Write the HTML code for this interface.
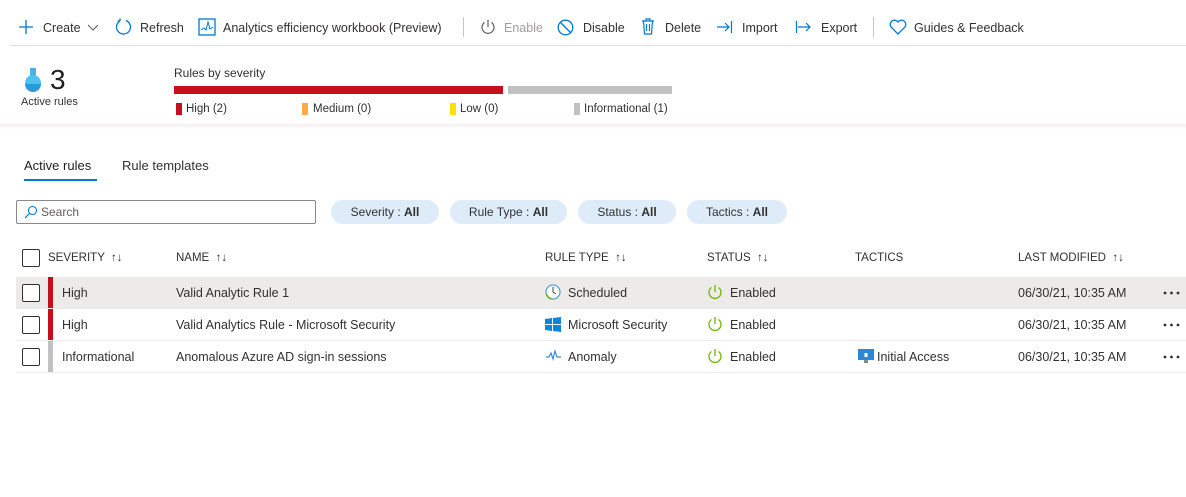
<!DOCTYPE html>
<html><head><style>
*{box-sizing:border-box;margin:0;padding:0}
body{width:1186px;height:497px;background:#fff;font-family:"Liberation Sans",sans-serif;font-size:12.5px;color:#323130;position:relative;overflow:hidden}
.a{position:absolute;white-space:nowrap}
.tb span{position:absolute;top:21px}
.ic{position:absolute}
.pill{position:absolute;top:200px;height:24px;border-radius:12px;background:#deecf9;font-size:12px;line-height:24px;text-align:center}
.hd{position:absolute;top:252px;font-size:11.5px;color:#323130}
.cb{position:absolute;left:22px;width:18px;height:18px;border:1px solid #323130;border-radius:2px;background:#fff}
.row{position:absolute;left:16px;width:1170px;height:32px;border-bottom:1px solid #edebe9}
.row span{position:absolute;top:9px}
.row svg.d{position:absolute;left:1147px;top:14px}
.sev{position:absolute;left:32px;top:0;width:5px;height:31px}
</style></head><body>
<div class="tb">
<svg class="ic" style="left:18px;top:19px" width="16" height="16"><path d="M8 1v14M1 8h14" stroke="#0078d4" stroke-width="1.3"/></svg>
<span style="left:43px">Create</span>
<svg class="ic" style="left:87px;top:24px" width="12" height="8"><path d="M1 1l5 5 5-5" stroke="#605e5c" fill="none"/></svg>
<svg class="ic" style="left:115px;top:18px" width="18" height="18"><path d="M11 2.5A7 7 0 1 1 5 3M5 3V0.5M5 3H2.5" stroke="#0078d4" fill="none" stroke-width="1.3"/></svg>
<span style="left:140px">Refresh</span>
<svg class="ic" style="left:198px;top:18px" width="18" height="18"><rect x="1" y="1" width="16" height="16" fill="none" stroke="#0078d4" stroke-width="1.3"/><path d="M3 12l3-2 2 2 2-8 2 7 3-2" stroke="#0078d4" fill="none"/></svg>
<span style="left:223px">Analytics efficiency workbook (Preview)</span>
<div class="a" style="left:463px;top:17px;width:1px;height:20px;background:#c8c6c4"></div>
<svg class="ic" style="left:480px;top:19px" width="16" height="16"><path d="M8 1v7M4.5 3.5a6 6 0 1 0 7 0" stroke="#605e5c" fill="none" stroke-width="1.2"/></svg>
<span style="left:504px;color:#a19f9d">Enable</span>
<svg class="ic" style="left:557px;top:19px" width="17" height="17"><circle cx="8.5" cy="8.5" r="7.3" stroke="#0078d4" fill="none" stroke-width="1.3"/><path d="M3.5 3.5l10 10" stroke="#0078d4" stroke-width="1.3"/></svg>
<span style="left:583px">Disable</span>
<svg class="ic" style="left:641px;top:18px" width="14" height="17"><path d="M1 3h12M5 3V1h4v2M2.5 3l1 13h7l1-13M5.5 6v7M8.5 6v7" stroke="#0078d4" fill="none" stroke-width="1.2"/></svg>
<span style="left:665px">Delete</span>
<svg class="ic" style="left:716px;top:20px" width="17" height="14"><path d="M1 7h12M9 3l4 4-4 4M15.5 1v12" stroke="#0078d4" fill="none" stroke-width="1.2"/></svg>
<span style="left:742px">Import</span>
<svg class="ic" style="left:795px;top:20px" width="17" height="14"><path d="M1.5 1v12M3 7h12M11 3l4 4-4 4" stroke="#0078d4" fill="none" stroke-width="1.2"/></svg>
<span style="left:821px">Export</span>
<div class="a" style="left:873px;top:17px;width:1px;height:20px;background:#c8c6c4"></div>
<svg class="ic" style="left:889px;top:19px" width="18" height="16"><path d="M9 15L2 8a4 4 0 0 1 7-5 4 4 0 0 1 7 5z" stroke="#0078d4" fill="none" stroke-width="1.3"/></svg>
<span style="left:914px">Guides &amp; Feedback</span>
</div>
<div class="a" style="left:10px;top:45px;width:1176px;height:1px;background:#e1dfdd"></div>
<svg class="ic" style="left:22px;top:67px" width="22" height="26"><rect x="8" y="1" width="6" height="8" fill="#50b0e0"/><circle cx="11" cy="16" r="8" fill="#50c0f0"/><path d="M3 17h16a8 8 0 0 1-16 0" fill="#2a9ad8"/></svg>
<div class="a" style="left:50px;top:64px;font-size:28px;color:#201f1e">3</div>
<div class="a" style="left:21px;top:96px;font-size:11px">Active rules</div>
<div class="a" style="left:174px;top:66px;font-size:12px">Rules by severity</div>
<div class="a" style="left:174px;top:86px;width:329px;height:8px;background:#c50f1f"></div>
<div class="a" style="left:508px;top:86px;width:164px;height:8px;background:#c1c1c1"></div>
<div class="a" style="left:176px;top:103px;width:6px;height:12px;background:#c50f1f"></div>
<div class="a" style="left:186px;top:103px;font-size:11.5px">High (2)</div>
<div class="a" style="left:302px;top:103px;width:6px;height:12px;background:#ffaa44"></div>
<div class="a" style="left:313px;top:103px;font-size:11.5px">Medium (0)</div>
<div class="a" style="left:450px;top:103px;width:6px;height:12px;background:#fce100"></div>
<div class="a" style="left:460px;top:103px;font-size:11.5px">Low (0)</div>
<div class="a" style="left:574px;top:103px;width:6px;height:12px;background:#c1c1c1"></div>
<div class="a" style="left:584px;top:103px;font-size:11.5px">Informational (1)</div>
<div class="a" style="left:0;top:124px;width:1186px;height:6px;background:linear-gradient(#f3f2f1,#fff)"></div>
<div class="a" style="left:24px;top:158px;font-size:13px;color:#201f1e">Active rules</div>
<div class="a" style="left:24px;top:179px;width:73px;height:2px;background:#0078d4"></div>
<div class="a" style="left:122px;top:158px;font-size:13px">Rule templates</div>
<div class="a" style="left:16px;top:200px;width:300px;height:24px;border:1px solid #8a8886;border-radius:2px"></div>
<svg class="ic" style="left:24px;top:205px" width="14" height="14"><circle cx="8.5" cy="5.5" r="4" stroke="#0078d4" fill="none" stroke-width="1.1"/><path d="M5.5 8.5L1 13" stroke="#0078d4" stroke-width="1.2"/></svg>
<div class="a" style="left:41px;top:205px;font-size:12px;color:#605e5c">Search</div>
<div class="pill" style="left:331px;width:108px">Severity : <b>All</b></div>
<div class="pill" style="left:450px;width:117px">Rule Type : <b>All</b></div>
<div class="pill" style="left:578px;width:98px">Status : <b>All</b></div>
<div class="pill" style="left:687px;width:100px">Tactics : <b>All</b></div>
<div class="cb" style="top:249px"></div>
<div class="hd" style="left:48px">SEVERITY &nbsp;↑↓</div>
<div class="hd" style="left:176px">NAME &nbsp;↑↓</div>
<div class="hd" style="left:545px">RULE TYPE &nbsp;↑↓</div>
<div class="hd" style="left:707px">STATUS &nbsp;↑↓</div>
<div class="hd" style="left:855px">TACTICS</div>
<div class="hd" style="left:1018px">LAST MODIFIED &nbsp;↑↓</div>

<div class="row" style="top:277px;background:#edebe9"><div class="sev" style="background:#c50f1f"></div><span style="left:46px">High</span><span style="left:160px">Valid Analytic Rule 1</span><span style="left:552px">Scheduled</span><span style="left:714px">Enabled</span><span style="left:1002px">06/30/21, 10:35 AM</span><svg class="d" width="18" height="4"><circle cx="2" cy="2" r="1.4" fill="#323130"/><circle cx="8.5" cy="2" r="1.4" fill="#323130"/><circle cx="15" cy="2" r="1.4" fill="#323130"/></svg></div>
<div class="row" style="top:309px"><div class="sev" style="background:#c50f1f"></div><span style="left:46px">High</span><span style="left:160px">Valid Analytics Rule - Microsoft Security</span><span style="left:552px">Microsoft Security</span><span style="left:714px">Enabled</span><span style="left:1002px">06/30/21, 10:35 AM</span><svg class="d" width="18" height="4"><circle cx="2" cy="2" r="1.4" fill="#323130"/><circle cx="8.5" cy="2" r="1.4" fill="#323130"/><circle cx="15" cy="2" r="1.4" fill="#323130"/></svg></div>
<div class="row" style="top:341px"><div class="sev" style="background:#c1c1c1"></div><span style="left:46px">Informational</span><span style="left:160px">Anomalous Azure AD sign-in sessions</span><span style="left:552px">Anomaly</span><span style="left:714px">Enabled</span><span style="left:861px">Initial Access</span><span style="left:1002px">06/30/21, 10:35 AM</span><svg class="d" width="18" height="4"><circle cx="2" cy="2" r="1.4" fill="#323130"/><circle cx="8.5" cy="2" r="1.4" fill="#323130"/><circle cx="15" cy="2" r="1.4" fill="#323130"/></svg></div>
<div class="cb" style="top:284px"></div><div class="cb" style="top:316px"></div><div class="cb" style="top:348px"></div>
<svg class="ic" style="left:545px;top:284px" width="16" height="16"><circle cx="8" cy="8" r="7" fill="#fff" stroke="#5aa0d0" stroke-width="1.3"/><path d="M8 3v5l3 2" stroke="#444" fill="none"/><path d="M1.5 10a7 7 0 0 0 5 5" stroke="#6bb700" fill="none" stroke-width="1.5"/></svg>
<svg class="ic" style="left:545px;top:317px" width="16" height="15"><path d="M0 2l7-1v6H0zM8 1l8-1v7H8zM0 8h7v6l-7-1zM8 8h8v7l-8-1z" fill="#0a86e0"/></svg>
<svg class="ic" style="left:546px;top:349px" width="15" height="12"><path d="M0 8h3l2-4 2 6 2-8 2 6h4" stroke="#3a8ad8" fill="none" stroke-width="1.2"/></svg>
<svg class="ic" style="left:707px;top:284px" width="16" height="16"><path d="M8 1v7M4.5 3.5a6 6 0 1 0 7 0" stroke="#6bb700" fill="none" stroke-width="1.3"/></svg>
<svg class="ic" style="left:707px;top:316px" width="16" height="16"><path d="M8 1v7M4.5 3.5a6 6 0 1 0 7 0" stroke="#6bb700" fill="none" stroke-width="1.3"/></svg>
<svg class="ic" style="left:707px;top:348px" width="16" height="16"><path d="M8 1v7M4.5 3.5a6 6 0 1 0 7 0" stroke="#6bb700" fill="none" stroke-width="1.3"/></svg>
<svg class="ic" style="left:858px;top:349px" width="16" height="16"><rect x="0" y="0" width="16" height="11" fill="#2b88d8"/><rect x="6" y="11" width="4" height="3" fill="#888"/><rect x="6.5" y="4" width="3" height="4" fill="#fff"/></svg>
</body></html>
